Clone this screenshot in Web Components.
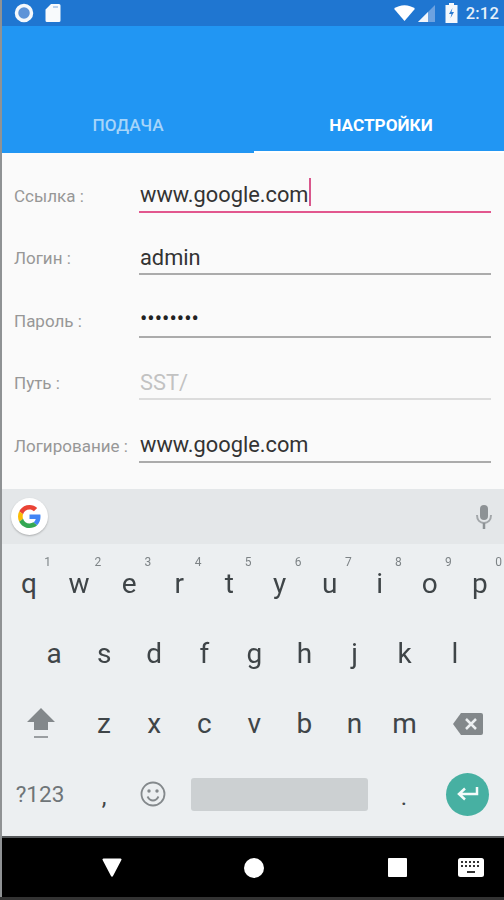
<!DOCTYPE html>
<html lang="ru">
<head>
<meta charset="utf-8">
<title>Настройки</title>
<style>
  html, body { margin: 0; padding: 0; background: #8f9294; }
  body { width: 504px; height: 900px; overflow: hidden; font-family: Roboto, "Noto Sans", sans-serif; }
  #app { display: flex; flex-direction: column; height: 897px; padding-left: 2px; box-sizing: border-box; filter: blur(.35px); }
  #foot { height: 3px; background: #333; }
</style>
</head>
<body>
<div id="app">
  <status-bar></status-bar>
  <tab-header></tab-header>
  <settings-form>
    <form-field label="Ссылка :" value="www.google.com" focused></form-field>
    <form-field label="Логин :" value="admin"></form-field>
    <form-field label="Пароль :" value="••••••••" secret></form-field>
    <form-field label="Путь :" value="SST/" hint></form-field>
    <form-field label="Логирование :" value="www.google.com"></form-field>
  </settings-form>
  <suggest-strip></suggest-strip>
  <soft-keyboard></soft-keyboard>
  <nav-bar></nav-bar>
</div>
<div id="foot"></div>

<script>
const define = (name, html) => {
    customElements.define(name, class extends HTMLElement {
        constructor() {
            super();
            this.attachShadow({ mode: 'open' });
        }
        connectedCallback() {
            this.shadowRoot.innerHTML = typeof html === 'function' ? html(this) : html;
        }
    });
};

define('status-bar', `
  <style>
    :host { display: flex; align-items: center; height: 26px; background: #1f76d1; color: #fff; padding: 0 5px 0 12px; }
    svg { display: block; }
    .left { display: flex; align-items: center; gap: 11px; flex: 1; }
    .right { display: flex; align-items: center; }
    .time { font: 500 16.500px Roboto, sans-serif; color: #e6f0fa; margin-left: 8px; letter-spacing: .2px; }
  </style>
  <div class="left">
    <svg width="20" height="20" viewBox="0 0 20 20"><circle cx="10" cy="10" r="7.500" fill="#5d93d8" stroke="#f4f8fc" stroke-width="3.500"/></svg>
    <svg width="16" height="20" viewBox="0 0 16 20"><path d="M6 1h8a1.500 1.500 0 0 1 1.500 1.500v15a1.500 1.500 0 0 1-1.500 1.500H2a1.500 1.500 0 0 1-1.500-1.500V6.500z" fill="#f8fafc"/><path d="M8 3h5v2H8z" fill="#b9d0ec"/></svg>
  </div>
  <div class="right">
    <svg width="21" height="18" viewBox="0 0 22 18"><path d="M0 4.500C6 -.5 16 -.5 22 4.500L11 17.500z" fill="#fff"/></svg>
    <svg width="17" height="17" viewBox="0 0 17 17" style="margin-left:3px"><path d="M0 17 17 0v17z" fill="#6da2e0"/><path d="M0 17 10 7v10z" fill="#f2f6fb"/></svg>
    <svg width="13" height="20" viewBox="0 0 12 20" style="margin-left:10px"><path d="M3.500 0h5v2H12v18H0V2h3.500z" fill="#f4f8fc"/><path d="M7 5 3.500 11H6l-1 4 3.500-6H6z" fill="#2a7bd3"/></svg>
    <span class="time">2:12</span>
  </div>
`);

define('tab-header', `
  <style>
    :host { display: flex; height: 127px; background: #2196f3; align-items: flex-end; }
    .tab { box-sizing: border-box; height: 54px; display: flex; align-items: center; justify-content: center;
           font: 500 17.200px Roboto, sans-serif; }
    .off { flex: 0 0 252px; color: #a6d5fa; padding-bottom: 2px; }
    .on { flex: 0 0 250px; color: #fff; border-bottom: 2px solid #fff; font-weight: 700; padding-left: 4px; }
  </style>
  <div class="tab off">ПОДАЧА</div>
  <div class="tab on">НАСТРОЙКИ</div>
`);

define('settings-form', `
  <style>
    :host { display: flex; flex-direction: column; height: 336px; background: #fafafa; padding-top: 10.500px; box-sizing: border-box; }
  </style>
  <slot></slot>
`);

define('form-field', (el) => {
    const focused = el.hasAttribute('focused');
    const secret = el.hasAttribute('secret');
    const hint = el.hasAttribute('hint');
    return `
    <style>
      :host { display: flex; height: 62.500px; box-sizing: border-box; padding-top: 13px; }
      .label { width: 137px; padding-left: 12px; padding-top: 2px; box-sizing: border-box; font: 17px Roboto, sans-serif; color: #979797; line-height: 34px; white-space: nowrap; }
      .input { width: 352px; height: 36px; box-sizing: border-box; padding-left: 1px; padding-top: 3px; border-bottom: 2px solid ${focused ? '#e2578e' : hint ? '#dcdcdc' : '#ababab'};
               font: 21.800px/32px Roboto, sans-serif; color: ${hint ? '#c2c2c2' : '#333'}; white-space: nowrap; display: flex; align-items: center; }
      .caret { display: inline-block; width: 2px; height: 28px; background: #d9578c; margin-left: 1px; position: relative; top: -3px; }
      .dots { letter-spacing: 0; color: #222; position: relative; top: -1px; }
    </style>
    <div class="label">${el.getAttribute('label')}</div>
    <div class="input"><span class="${secret ? 'dots' : ''}">${el.getAttribute('value')}</span>${focused ? '<span class="caret"></span>' : ''}</div>`;
});

define('suggest-strip', `
  <style>
    :host { display: flex; align-items: center; justify-content: space-between; height: 55px; background: #e4e7e9; padding: 0 11px 0 9px; box-sizing: border-box; }
    .g { width: 37px; height: 37px; border-radius: 50%; background: #fff; box-shadow: 0 1px 2px rgba(0,0,0,.25); display: flex; align-items: center; justify-content: center; }
    svg { display: block; }
  </style>
  <div class="g">
    <svg width="23" height="23" viewBox="0 0 48 48">
      <path fill="#EA4335" d="M24 9.500c3.540 0 6.710 1.220 9.210 3.600l6.850-6.850C35.900 2.380 30.470 0 24 0 14.620 0 6.510 5.380 2.560 13.220l7.980 6.190C12.430 13.720 17.740 9.500 24 9.500z"/>
      <path fill="#4285F4" d="M46.980 24.550c0-1.570-.15-3.090-.38-4.550H24v9.020h12.940c-.58 2.960-2.260 5.480-4.780 7.180l7.730 6c4.510-4.180 7.090-10.360 7.090-17.650z"/>
      <path fill="#FBBC05" d="M10.530 28.590c-.48-1.450-.76-2.990-.76-4.590s.27-3.140.76-4.590l-7.980-6.190C.92 16.460 0 20.120 0 24c0 3.880.92 7.540 2.560 10.780l7.970-6.190z"/>
      <path fill="#34A853" d="M24 48c6.480 0 11.930-2.130 15.890-5.810l-7.730-6c-2.150 1.450-4.920 2.300-8.160 2.300-6.260 0-11.570-4.220-13.470-9.910l-7.980 6.190C6.510 42.620 14.620 48 24 48z"/>
    </svg>
  </div>
  <svg width="18" height="24" viewBox="0 0 18 24"><rect x="5" y="0" width="8" height="15" rx="4" fill="#8d9295"/><path d="M2 10c0 5 3 8 7 8s7-3 7-8" fill="none" stroke="#a2a6a9" stroke-width="2"/><path d="M9 18v6" stroke="#8d9295" stroke-width="2.500"/></svg>
`);

define('kb-key', (el) => {
    const hint = el.getAttribute('hint');
    return `
    <style>
      :host { display: flex; position: relative; flex: 0 0 50.100px; height: 70.400px; align-items: center; justify-content: center;
              font: 28px Roboto, sans-serif; color: #3f4548; }
      .hint { position: absolute; right: 3px; top: 7px; font-size: 12px; color: #7d8386; }
    </style>
    <slot></slot>${hint ? `<span class="hint">${hint}</span>` : ''}`;
});

define('soft-keyboard', (el) => {
    const key = (c, h) => `<kb-key${h !== undefined ? ` hint="${h}"` : ''}>${c}</kb-key>`;
    const row1 = [...'qwertyuiop'].map((c, i) => key(c, (i + 1) % 10)).join('');
    const row2 = [...'asdfghjkl'].map((c) => key(c)).join('');
    const row3 = [...'zxcvbnm'].map((c) => key(c)).join('');
    return `
    <style>
      :host { display: block; height: 294px; background: #eceff1; box-sizing: border-box; padding-top: 4px; border-bottom: 2px solid #55585a; }
      .row { display: flex; height: 70.400px; }
      .r1 { padding-left: 2px; }
      .r2 { padding-left: 27px; }
      .r3 { align-items: center; }
      .r4 { align-items: center; }
      .shift { width: 77px; display: flex; justify-content: center; }
      .back { width: 50px; margin-left: 23px; }
      .sym { width: 76px; text-align: center; font: 22.500px Roboto, sans-serif; color: #6f7578; }
      .comma { width: 52px; text-align: center; font: 24px Roboto, sans-serif; color: #3f4548; padding-top: 6px; }
      .emoji { width: 46px; display: flex; justify-content: center; }
      .space { width: 177px; height: 33px; background: #ccd0d2; border-radius: 3px; margin-left: 15px; }
      .dot { width: 72px; text-align: center; font: 24px Roboto, sans-serif; color: #3f4548; padding-top: 5px; }
      .enter { width: 43px; height: 43px; border-radius: 50%; background: #47b0a2; display: flex; align-items: center; justify-content: center; margin-left: 6px; }
      svg { display: block; }
    </style>
    <div class="row r1">${row1}</div>
    <div class="row r2">${row2}</div>
    <div class="row r3">
      <div class="shift"><svg width="30" height="34" viewBox="0 0 30 34"><path d="M15 1 29 15h-7v8H8v-8H1z" fill="#83888b"/><path d="M8 30h14" stroke="#9a9ea1" stroke-width="2"/></svg></div>
      ${row3}
      <div class="back"><svg width="30" height="22" viewBox="0 0 30 22"><path d="M8 0h20a2 2 0 0 1 2 2v18a2 2 0 0 1-2 2H8L0 11z" fill="#83888b"/><path d="M13 6l10 10M23 6 13 16" stroke="#eceff1" stroke-width="2.500"/></svg></div>
    </div>
    <div class="row r4">
      <div class="sym">?123</div>
      <div class="comma">,</div>
      <div class="emoji"><svg width="26" height="26" viewBox="0 0 26 26"><circle cx="13" cy="13" r="11.500" fill="none" stroke="#84898c" stroke-width="1.800"/><circle cx="9" cy="10" r="1.700" fill="#84898c"/><circle cx="17" cy="10" r="1.700" fill="#84898c"/><path d="M7.500 15.500c1.500 3 3.500 4 5.500 4s4-1 5.500-4" fill="none" stroke="#84898c" stroke-width="1.800"/></svg></div>
      <div class="space"></div>
      <div class="dot">.</div>
      <div class="enter"><svg width="22" height="16" viewBox="0 0 22 16"><path d="M20 1v7H3M8 2.500 2 8l6 5.500" fill="none" stroke="#f4fbfa" stroke-width="2.500"/></svg></div>
    </div>`;
});

define('nav-bar', `
  <style>
    :host { display: flex; align-items: center; height: 59px; background: #000; }
    svg { display: block; }
  </style>
  <svg style="margin-left:100px" width="20" height="19" viewBox="0 0 20 19"><path d="M1.500 .5h17a1 1 0 0 1 .9 1.500L11 18a1.100 1.100 0 0 1-2 0L.6 2a1 1 0 0 1 .9-1.500z" fill="#fff"/></svg>
  <svg style="margin-left:122px" width="20" height="20" viewBox="0 0 20 20"><circle cx="10" cy="10" r="10" fill="#fff"/></svg>
  <svg style="margin-left:124px" width="19" height="19" viewBox="0 0 19 19"><rect width="19" height="19" rx="1" fill="#fff"/></svg>
  <svg style="margin-left:51px" width="26" height="20" viewBox="0 0 26 20"><rect width="26" height="19" rx="2.500" fill="#fff"/><path d="M3 4h2M7 4h2M11 4h2M15 4h2M19 4h2M3 8h2M7 8h2M11 8h2M15 8h2M19 8h2" stroke="#333" stroke-width="2"/><path d="M9 14h8" stroke="#333" stroke-width="2"/></svg>
`);
</script>
</body>
</html>
